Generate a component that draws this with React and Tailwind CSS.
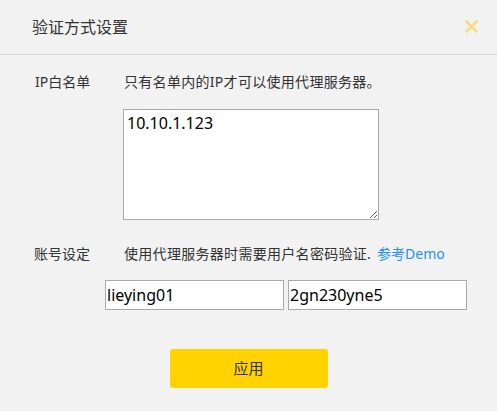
import React from "react";

const font = { fontFamily: '"Noto Sans", "Noto Sans CJK SC", sans-serif' };

export default function App() {
  return (
    <div className="w-[497px] h-[411px] bg-[#f2f2f2] text-[#333]" style={font}>
      {/* Header */}
      <div className="h-[55px] flex items-center justify-between border-b border-[#d4d4d4] pl-[32px] pr-[19px]">
        <span className="text-[16px] leading-[20px] -mt-[1px]">验证方式设置</span>
        <svg width="13" height="13" viewBox="0 0 13 13" className="-mt-[1px]">
          <path d="M1.5 1.5 L11.5 11.5 M11.5 1.5 L1.5 11.5" stroke="#f8dc82" strokeWidth="2.6" strokeLinecap="square" />
        </svg>
      </div>

      {/* IP whitelist */}
      <div className="flex pt-[17px] text-[14px] leading-[20px]">
        <span className="w-[124px] pl-[35px]">IP白名单</span>
        <span className="tracking-[0.3px]">只有名单内的IP才可以使用代理服务器。</span>
      </div>
      <div className="pl-[123px] mt-[17px]">
        <textarea
          defaultValue="10.10.1.123"
          className="block w-[256px] h-[111px] bg-white border border-[#a9a9a9] px-[3px] py-[2px] text-[16px] leading-[22px] text-black outline-none"
        />
      </div>

      {/* Account */}
      <div className="flex mt-[24px] text-[14px] leading-[20px]">
        <span className="w-[124px] pl-[34px]">账号设定</span>
        <span className="tracking-[0.3px]">
          使用代理服务器时需要用户名密码验证.{" "}
          <span className="text-[#1e8fff] tracking-normal ml-[2px]">参考Demo</span>
        </span>
      </div>
      <div className="flex gap-[4px] pl-[105px] mt-[16px]">
        <input
          defaultValue="lieying01"
          className="w-[179px] h-[30px] bg-white border border-[#a9a9a9] px-[1px] text-[16px] text-black outline-none"
        />
        <input
          defaultValue="2gn230yne5"
          className="w-[179px] h-[30px] bg-white border border-[#a9a9a9] px-[1px] text-[16px] text-black outline-none"
        />
      </div>

      {/* Apply */}
      <div className="flex justify-center mt-[39px]">
        <button className="w-[158px] h-[39px] rounded-[3px] bg-[#ffd200] text-[15px] text-[#333]">
          应用
        </button>
      </div>
    </div>
  );
}
